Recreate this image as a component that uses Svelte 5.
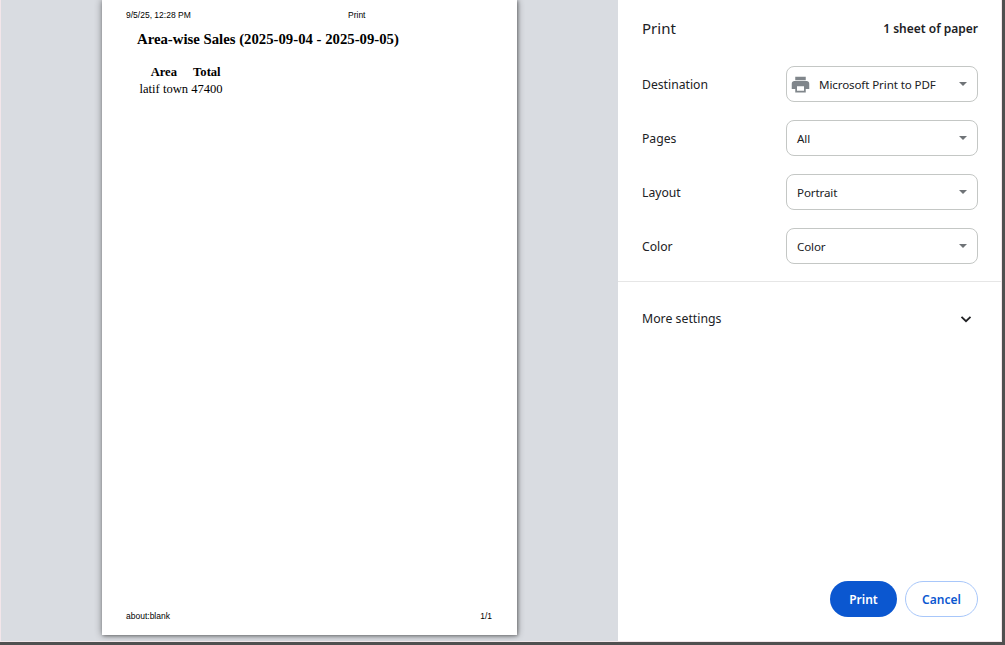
<script>
  const settings = [
    { label: "Destination", value: "Microsoft Print to PDF", printer: true },
    { label: "Pages", value: "All" },
    { label: "Layout", value: "Portrait" },
    { label: "Color", value: "Color" },
  ];
</script>

<div class="window">
  <main class="preview">
    <div class="sheet">
      <div class="page-head">
        <span class="date">9/5/25, 12:28 PM</span>
        <span class="doc-title">Print</span>
      </div>
      <div class="page-body">
        <h2>Area-wise Sales (2025-09-04 - 2025-09-05)</h2>
        <table>
          <thead>
            <tr><th>Area</th><th>Total</th></tr>
          </thead>
          <tbody>
            <tr><td>latif town</td><td>47400</td></tr>
          </tbody>
        </table>
      </div>
      <div class="page-foot">
        <span>about:blank</span>
        <span>1/1</span>
      </div>
    </div>
  </main>

  <aside class="sidebar">
    <header>
      <h1>Print</h1>
      <span class="sheets">1 sheet of paper</span>
    </header>

    <div class="settings">
      {#each settings as s}
        <div class="row">
          <span class="label">{s.label}</span>
          <div class="select">
            {#if s.printer}
              <svg class="printer" width="21" height="21" viewBox="0 0 24 24">
                <path fill="#80868b" d="M19 8H5c-1.66 0-3 1.34-3 3v6h4v4h12v-4h4v-6c0-1.66-1.34-3-3-3zm-3 11H8v-5h8v5zM18 3H6v4h12V3z" />
              </svg>
            {/if}
            <span>{s.value}</span>
            <i class="caret"></i>
          </div>
        </div>
      {/each}
    </div>

    <div class="more">
      <span>More settings</span>
      <svg width="14" height="14" viewBox="0 0 14 14">
        <path d="M2.5 4.8 7 9.2l4.5-4.4" fill="none" stroke="#202124" stroke-width="1.8" />
      </svg>
    </div>

    <footer>
      <button class="primary">Print</button>
      <button class="secondary">Cancel</button>
    </footer>
  </aside>
</div>

<style>
  :global(body) {
    margin: 0;
    background: #505050;
  }
  .window {
    display: flex;
    width: 1002px;
    height: 642px;
    box-sizing: border-box;
    overflow: hidden;
    border: 1px solid #f3e6ea;
    border-top: none;
    font-family: "Noto Sans", "Open Sans", sans-serif;
    color: #202124;
  }
  .preview {
    width: 617px;
    flex: none;
    background: #d9dce1;
    box-sizing: border-box;
    padding-left: 101px;
  }
  .sheet {
    width: 415px;
    height: 635px;
    background: #fff;
    box-shadow: 0 0 7px rgba(0, 0, 0, 0.45), 1px 1px 3px rgba(0, 0, 0, 0.3);
    display: flex;
    flex-direction: column;
    padding: 10px 25px 14px 24px;
    box-sizing: border-box;
    font-family: "Liberation Sans", Arial, sans-serif;
    font-size: 8.5px;
    color: #000;
  }
  .page-head {
    display: flex;
    height: 10px;
    line-height: 10px;
  }
  .date {
    width: 222px;
  }
  .page-body {
    flex: 1;
    font-family: "Liberation Serif", "Times New Roman", serif;
    padding: 10px 0 0 11px;
  }
  h2 {
    margin: 0;
    font-size: 14.75px;
    line-height: 18px;
    font-weight: bold;
  }
  table {
    margin-top: 16px;
    margin-left: 0;
    border-collapse: separate;
    border-spacing: 2px 0;
    font-size: 12.6px;
    line-height: 17px;
  }
  th,
  td {
    padding: 0 0.5px;
    text-align: center;
  }
  .page-foot {
    display: flex;
    justify-content: space-between;
    line-height: 10px;
  }
  .sidebar {
    flex: 1;
    background: #fff;
    display: flex;
    flex-direction: column;
  }
  header {
    display: flex;
    justify-content: space-between;
    align-items: center;
    padding: 16px 23px 0 24px;
    height: 24px;
  }
  h1 {
    margin: 0;
    font-size: 15px;
    font-weight: 400;
  }
  .sheets {
    font-size: 12px;
    font-weight: 600;
  }
  .settings {
    display: flex;
    flex-direction: column;
    gap: 18px;
    padding: 26px 23px 17px 24px;
    border-bottom: 1px solid #e6e6e6;
  }
  .row {
    display: flex;
    justify-content: space-between;
    align-items: center;
    font-size: 12.2px;
  }
  .select {
    display: flex;
    align-items: center;
    width: 192px;
    height: 36px;
    box-sizing: border-box;
    border: 1px solid #c4c7c5;
    border-radius: 8px;
    padding: 0 10px;
    gap: 8px;
    font-size: 11.6px;
    letter-spacing: -0.12px;
  }
  .select span {
    flex: 1;
  }
  .printer {
    margin-left: -7px;
  }
  .caret {
    width: 0;
    height: 0;
    border-left: 4px solid transparent;
    border-right: 4px solid transparent;
    border-top: 4px solid #6f7377;
  }
  .more {
    display: flex;
    justify-content: space-between;
    align-items: center;
    padding: 28px 28px 0 24px;
    font-size: 12.3px;
  }
  footer {
    margin-top: auto;
    display: flex;
    justify-content: flex-end;
    gap: 8px;
    padding: 0 23px 24px 0;
  }
  button {
    height: 36px;
    border-radius: 18px;
    font-family: inherit;
    font-size: 12px;
    font-weight: 600;
    padding: 0;
    box-sizing: border-box;
  }
  .primary {
    width: 67px;
    background: #0b57d0;
    border: none;
    color: #fff;
  }
  .secondary {
    width: 73px;
    background: #fff;
    border: 1px solid #a8c7fa;
    color: #0b57d0;
  }
</style>
